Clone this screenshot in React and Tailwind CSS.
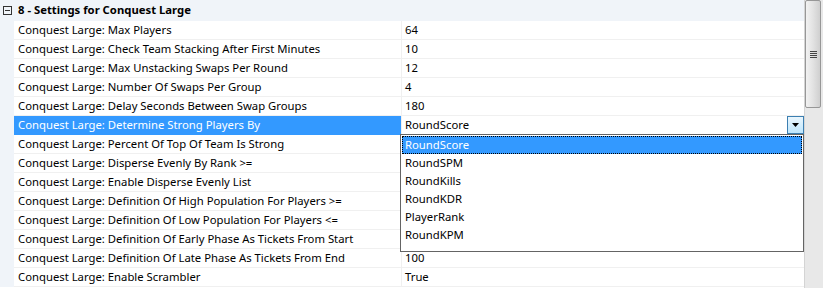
import React from 'react'

const rows = [
  ['Conquest Large: Max Players', '64'],
  ['Conquest Large: Check Team Stacking After First Minutes', '10'],
  ['Conquest Large: Max Unstacking Swaps Per Round', '12'],
  ['Conquest Large: Number Of Swaps Per Group', '4'],
  ['Conquest Large: Delay Seconds Between Swap Groups', '180'],
  ['Conquest Large: Determine Strong Players By', 'RoundScore', true],
  ['Conquest Large: Percent Of Top Of Team Is Strong', ''],
  ['Conquest Large: Disperse Evenly By Rank >=', ''],
  ['Conquest Large: Enable Disperse Evenly List', ''],
  ['Conquest Large: Definition Of High Population For Players >=', ''],
  ['Conquest Large: Definition Of Low Population For Players <=', ''],
  ['Conquest Large: Definition Of Early Phase As Tickets From Start', ''],
  ['Conquest Large: Definition Of Late Phase As Tickets From End', '100'],
  ['Conquest Large: Enable Scrambler', 'True'],
]

const options = ['RoundScore', 'RoundSPM', 'RoundKills', 'RoundKDR', 'PlayerRank', 'RoundKPM']

function Row({ label, value, selected }) {
  return (
    <div className="flex h-[19px]">
      <div className="w-[14px] shrink-0 bg-[#f0f4f9]" />
      <div
        className={
          selected
            ? 'w-[387px] shrink-0 bg-[#3399ff] text-white pl-[4px] leading-[18px] border-b border-[#3399ff]'
            : 'w-[387px] shrink-0 pl-[4px] leading-[18px] border-b border-[#f0f0f0]'
        }
      >
        {label}
      </div>
      <div className="flex-1 border-l border-b border-[#f0f0f0] pl-[3px] leading-[18px] flex">
        <span className="flex-1">{value}</span>
        {selected && (
          <div className="w-[17px] h-[18px] border border-[#3c7fb1] bg-gradient-to-b from-[#eaf6fd] to-[#bee6fd] flex items-center justify-center">
            <svg width="7" height="4" viewBox="0 0 7 4">
              <path d="M0 0h7L3.5 4z" fill="#000" />
            </svg>
          </div>
        )}
      </div>
    </div>
  )
}

export default function App() {
  return (
    <div className="w-[823px] h-[288px] overflow-hidden flex bg-white text-[11.3px] text-black" style={{ fontFamily: '"Noto Sans", "Open Sans", sans-serif' }}>
      <div className="w-[804px] shrink-0 relative">
        <div className="h-[21px] bg-[#f0f4f9] flex items-center">
          <div className="w-[9px] h-[9px] ml-[3px] border border-[#333] flex items-center justify-center">
            <div className="w-[5px] h-px bg-[#333]" />
          </div>
          <span className="ml-[6px] font-bold">8 - Settings for Conquest Large</span>
        </div>
        {rows.map(([l, v, s]) => (
          <Row key={l} label={l} value={v} selected={s} />
        ))}

        <div className="absolute left-[400px] top-[134px] w-[404px] h-[118px] bg-white border border-[#646464] p-px">
          {options.map((o, i) => (
            <div
              key={o}
              className={
                i === 0
                  ? 'h-[18px] leading-[16px] pl-[2px] bg-[#3399ff] text-white border border-dotted border-black'
                  : 'h-[18px] leading-[18px] pl-[3px]'
              }
            >
              {o}
            </div>
          ))}
        </div>
      </div>

      <div className="flex-1 bg-[#e8e8e8] border-l border-[#d4d4d4] flex flex-col">
        <div className="w-[16px] h-[108px] rounded-[2px] border border-[#979797] bg-gradient-to-r from-[#f2f2f2] via-[#e2e2e2] to-[#cfcfcf] flex items-center justify-center">
          <div className="flex flex-col gap-px">
            <div className="w-[7px] h-px bg-[#444]" />
            <div className="w-[7px] h-px bg-[#444]" />
            <div className="w-[7px] h-px bg-[#444]" />
            <div className="w-[7px] h-px bg-[#444]" />
          </div>
        </div>
      </div>
    </div>
  )
}
